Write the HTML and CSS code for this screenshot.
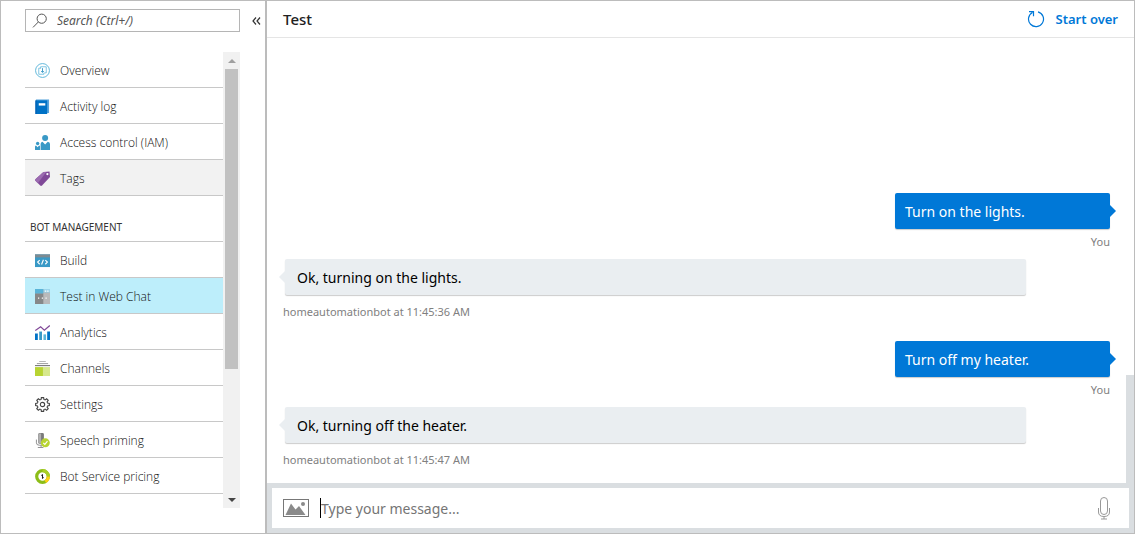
FILE: index.html
```html
<!DOCTYPE html>
<html lang="en">
<head>
<meta charset="utf-8">
<title>Test in Web Chat</title>
<link rel="stylesheet" href="styles.css">
</head>
<body>
<div class="app">
  <aside class="sidebar">
    <div class="search-row">
      <label class="search">
        <svg class="search-icon" viewBox="0 0 16 16" width="16" height="16" fill="none" stroke="#555"><circle cx="9.7" cy="5.7" r="4.6"/><path d="M6.3 9L1 14.4"/></svg>
        <input class="search-input" type="text" placeholder="Search (Ctrl+/)" aria-label="Search">
      </label>
      <button class="collapse" type="button" aria-label="Collapse menu"><svg viewBox="0 0 9 8" width="9" height="8" fill="none" stroke="#333" stroke-width="1.2"><path d="M4 .5L1 4l3 3.5M8 .5L5 4l3 3.5"/></svg></button>
    </div>
    <div class="menu">
      <nav class="menu-list">
        <a class="item" href="#overview"><svg class="icon" viewBox="0 0 16 16" fill="none" stroke="#59b4d9"><circle cx="8" cy="8" r="7.400"/><path d="M6 6V4h6v6.500h-2M6 5.500H4V12h5.500v-1.500" stroke-width=".8"/><path d="M8 5.500v4.500M6.500 8.500L8 10l1.500-1.500" stroke="#3999c6"/></svg><span>Overview</span></a>
        <a class="item" href="#activity"><svg class="icon" viewBox="0 0 16 16"><path fill="#59a5dc" d="M1 .5h14V15H1z"/><path fill="#0072c6" d="M.5 1.500H13V16H.5z"/><path fill="#fff" d="M4 4.500h7v2.500H4z"/><path fill="#0058ad" d="M.5 1.500h1V16h-1z"/></svg><span>Activity log</span></a>
        <a class="item" href="#access"><svg class="icon" viewBox="0 0 16 16" fill="#3999c6"><circle cx="10.800" cy="3.300" r="3.200"/><path d="M6 16V9.500Q6 7.300 8 7.100L10.800 10l2.800-2.900q2.400.2 2.400 2.400V16z"/><circle cx="2.800" cy="9" r="1.800"/><path d="M0 16v-3.500q0-1 1-1.200L2.800 13l1.500-1.700 1 .3V16z"/></svg><span>Access control (IAM)</span></a>
        <a class="item item-hover" href="#tags"><svg class="icon" viewBox="0 0 16 16"><path fill="#804998" d="M9 1L15.500.5 16 6.500l-8.500 9q-1 .8-2 0L.5 10.500q-.8-1 .2-2z"/><path fill="#9b6bb0" d="M9 1L.7 8.500q-1 1-.2 2L3 13 12 1z"/><circle cx="13.200" cy="3.300" r="1.200" fill="#fff"/></svg><span>Tags</span></a>
        <h2 class="section">BOT MANAGEMENT</h2>
        <a class="item" href="#build"><svg class="icon" viewBox="0 0 16 16"><path fill="#3999c6" d="M0 1.500h16v13.500H0z"/><path fill="#7d8b92" d="M0 1.500h16v3.200H0z"/><path fill="none" stroke="#fff" stroke-width="1.200" d="M5 7.500L2.800 9.700 5 12M11 7.500l2.200 2.200L11 12M9 7.200l-2 5"/></svg><span>Build</span></a>
        <a class="item item-active" href="#test"><svg class="icon" viewBox="0 0 16 16"><path fill="#a0a1a2" d="M0 0h16v16H0z"/><path fill="#59b4d9" d="M0 0h9v5H0z"/><path fill="#9bd5ec" d="M9 0h7v4H9z"/><path fill="#868889" d="M0 5h9v11H0z"/><path fill="#b9babb" d="M9 4h7v12H9z"/><path fill="#fff" d="M3.200 9h1.300v1.300H3.200zM7.200 9h1.300v1.300H7.200zM11.200 9h1.300v1.300h-1.300zM10.500 1.500H12V3h-1.500zM13 1.500h1.500V3H13z"/></svg><span>Test in Web Chat</span></a>
        <a class="item" href="#analytics"><svg class="icon" viewBox="0 0 16 16"><path fill="#0072c6" d="M0 9h3v7H0zM13 7h3v9h-3z"/><path fill="#3999c6" d="M4.500 7h3v9h-3z"/><path fill="#59b4d9" d="M9 10h2.800v6H9z"/><path fill="none" stroke="#804998" stroke-width="1.300" d="M.3 6L6 1.800l4 3.700L15.800.6"/></svg><span>Analytics</span></a>
        <a class="item" href="#channels"><svg class="icon" viewBox="0 0 16 16"><path fill="#b8d432" d="M0 6.500h8.500V16H0z"/><path fill="#d7e88d" d="M8.500 6.500H16V16H8.500z"/><path fill="#7a7a7a" d="M0 4.300h16v1.200H0z"/><path fill="#a0a1a2" d="M2 2.200h12v1.100H2z"/><path fill="#b8b8b8" d="M4.500 0h7v1.100h-7z"/></svg><span>Channels</span></a>
        <a class="item" href="#settings"><svg class="icon" viewBox="0 0 16 16" fill="none" stroke="#444" stroke-width="1.200"><path d="M6.500 2.600L6.800.7h2.400l.3 1.900 1.300.5 1.600-1.200 1.700 1.700-1.200 1.600.5 1.300 1.900.3v2.400l-1.900.3-.5 1.300 1.200 1.600-1.700 1.700-1.600-1.200-1.300.5-.3 1.900H6.800l-.3-1.900-1.300-.5-1.600 1.200-1.700-1.700 1.200-1.600-.5-1.300-1.900-.3V6.800l1.900-.3.5-1.300L1.900 3.600l1.700-1.700 1.600 1.200z"/><circle cx="8" cy="8" r="2.300"/></svg><span>Settings</span></a>
        <a class="item" href="#speech"><svg class="icon" viewBox="0 0 16 16"><rect x="3.500" y="0" width="6" height="11.500" rx="1.500" fill="#7a7a7a"/><path fill="#b0b0b0" d="M4 .5h2.500v10.500H4z"/><path fill="none" stroke="#8a8a8a" d="M1.500 7v3.500q0 2.500 3 2.500h3M6.500 13v2M3 15.500h6"/><circle cx="11" cy="10.500" r="4.800" fill="#b8d432"/><path fill="none" stroke="#fff" stroke-width="1.200" d="M8.800 10.500l1.700 1.700 2.800-3.500"/></svg><span>Speech priming</span></a>
        <a class="item" href="#pricing"><svg class="icon" viewBox="0 0 16 16" fill="none"><circle cx="8" cy="8" r="6.200" stroke="#8cbd18" stroke-width="3.400"/><path stroke="#a9cf25" stroke-width="3.400" d="M8 1.800A6.200 6.200 0 0 1 14.200 8"/><path stroke="#fcd116" stroke-width="3.400" d="M14.200 8A6.200 6.200 0 0 1 11 13.400"/><path stroke="#222" stroke-width="1.100" d="M8 5.500v5M6.800 7L8 6.300M8 9.800l1.200-.8"/></svg><span>Bot Service pricing</span></a>
      </nav>
      <div class="scrollbar">
        <button class="scroll-button" type="button" aria-label="Scroll up"><svg viewBox="0 0 8 4" width="8" height="4" fill="#a0a0a0"><path d="M0 4l4-4 4 4z"/></svg></button>
        <div class="thumb"></div>
        <button class="scroll-button" type="button" aria-label="Scroll down"><svg viewBox="0 0 8 4" width="8" height="4" fill="#444"><path d="M0 0l4 4 4-4z"/></svg></button>
      </div>
    </div>
  </aside>
  <main class="chat">
    <header class="chat-header">
      <h1 class="title">Test</h1>
      <button class="restart" type="button"><svg viewBox="0 0 18 18" width="18" height="18" fill="none" stroke="#0078d7" stroke-width="1.200"><path d="M11 1.900A7.500 7.500 0 1 1 5.500 2.500M2 1.700h4.500v4.500"/></svg>Start over</button>
    </header>
    <div class="thread-wrap">
      <div class="thread">
        <div class="message from-user"><p class="bubble">Turn on the lights.</p><span class="meta">You</span></div>
        <div class="message from-bot"><p class="bubble">Ok, turning on the lights.</p><span class="meta">homeautomationbot at 11:45:36 AM</span></div>
        <div class="message from-user"><p class="bubble">Turn off my heater.</p><span class="meta">You</span></div>
        <div class="message from-bot"><p class="bubble">Ok, turning off the heater.</p><span class="meta">homeautomationbot at 11:45:47 AM</span></div>
      </div>
      <div class="thread-scroll"><div class="thread-thumb"></div></div>
    </div>
    <form class="composer">
      <div class="composer-box">
        <button class="tool" type="button" aria-label="Upload picture"><svg viewBox="0 0 26 18" width="26" height="18"><rect x=".5" y=".5" width="25" height="17" fill="none" stroke="#777"/><path fill="#8a8a8a" d="M2.500 16L8 4.500l4.500 6 3.500-3.500 6.500 9z"/><circle cx="20" cy="5" r="2" fill="#8a8a8a"/></svg></button>
        <span class="caret"></span>
        <input class="message-input" type="text" placeholder="Type your message..." aria-label="Message">
        <button class="tool" type="button" aria-label="Speak"><svg viewBox="0 0 12 24" width="12" height="24" fill="none" stroke="#999"><rect x="2.500" y="1.500" width="7" height="17" rx="3.500"/><path d="M.5 12v4q0 4.500 5.500 4.500t5.500-4.500v-4M6 20.500V23M3 23h6"/></svg></button>
      </div>
    </form>
  </main>
</div>
</body>
</html>
```

FILE: styles.css
```css
* { box-sizing: border-box; }
body { margin: 0; font-family: "Noto Sans", "Open Sans", sans-serif; font-size: 12px; color: #333; background: #fff; }
button { border: 0; padding: 0; background: none; font: inherit; display: flex; align-items: center; justify-content: center; }
input { border: 0; padding: 0; outline: 0; background: none; font: inherit; min-width: 0; }
svg { display: block; flex: none; }

.app { display: flex; height: 100vh; border: 1px solid #bcbcbc; }

.sidebar { flex: none; width: 266px; padding: 8px 0 25px 24px; border-right: 2px solid #bcbcbc; display: flex; flex-direction: column; gap: 20px; }
.search-row { display: flex; align-items: center; gap: 12px; }
.search { width: 215px; height: 23px; border: 1px solid #b5b5b5; display: flex; align-items: center; gap: 9px; padding: 0 6px; }
.search-input { flex: 1; font-size: 12px; font-style: italic; }
.search-input::placeholder { color: #555; opacity: 1; }

.menu { flex: 1; min-height: 0; width: 215px; display: flex; }
.menu-list { flex: 1; overflow: hidden; }
.item { display: flex; align-items: center; gap: 10px; height: 36px; padding: 2px 0 0 10px; border-bottom: 1px solid #c8c8c8; color: #111; font-family: "Open Sans", sans-serif; font-weight: 300; text-decoration: none; white-space: nowrap; }
.item-hover { background: #f2f2f2; }
.item-active { background: #bdeefb; }
.icon { width: 15px; height: 15px; }
.section { margin: 0; height: 46px; padding: 16px 0 0 5px; border-bottom: 1px solid #c8c8c8; font-size: 10px; font-weight: 400; line-height: 30px; }
.scrollbar { flex: none; width: 17px; background: #f1f1f1; display: flex; flex-direction: column; }
.scroll-button { flex: none; height: 17px; }
.thumb { flex: 0 0 300px; margin: 0 2px; background: #c1c1c1; }
.thumb + .scroll-button { margin-top: auto; }

.chat { flex: 1; min-width: 0; display: flex; flex-direction: column; }
.chat-header { flex: none; height: 37px; padding: 0 16px; border-bottom: 1px solid #e5e5e5; display: flex; align-items: center; justify-content: space-between; }
.title { margin: 0; font-size: 15px; font-weight: 500; color: #222; }
.restart { gap: 11px; color: #0078d7; font-size: 13px; font-weight: 600; }

.thread-wrap { flex: 1; min-height: 0; display: flex; }
.thread { flex: 1; padding: 0 16px; overflow: hidden; display: flex; flex-direction: column; justify-content: flex-end; }
.thread-scroll { flex: none; width: 8px; display: flex; align-items: flex-end; }
.thread-thumb { width: 8px; height: 108px; background: #dadee1; }
.message { display: flex; flex-direction: column; }
.bubble { position: relative; margin: 0; height: 36px; line-height: 34px; font-size: 14px; border-radius: 2px; box-shadow: 0 1px 1px rgba(0, 0, 0, .2); }
.bubble::after { content: ""; position: absolute; top: 12px; border: 6px solid transparent; }
.meta { font-size: 11px; line-height: 26px; color: #808080; }
.from-user { align-items: flex-end; padding-bottom: 4px; }
.from-user .bubble { width: 215px; padding: 2px 10px 0; color: #fff; background: #0078d7; }
.from-user .bubble::after { left: 100%; border-left-color: #0078d7; border-right: 0; }
.from-bot { padding: 0 84px 10px 0; }
.from-bot .bubble { margin-left: 2px; padding: 2px 12px 0; color: #000; background: #eaeef1; }
.from-bot .bubble::after { right: 100%; border-right-color: #eaeef1; border-left: 0; }
.from-bot .meta { padding-top: 4px; }
.from-bot:not(:last-child) { padding-bottom: 16px; }

.composer { flex: none; padding: 5px; background: #dadee1; }
.composer-box { height: 40px; padding: 0 19px 0 11px; background: #fff; display: flex; align-items: center; }
.caret { width: 1px; height: 20px; margin-left: 11px; background: #000; }
.message-input { flex: 1; font-size: 14px; }
.message-input::placeholder { color: #757575; opacity: 1; }
```
